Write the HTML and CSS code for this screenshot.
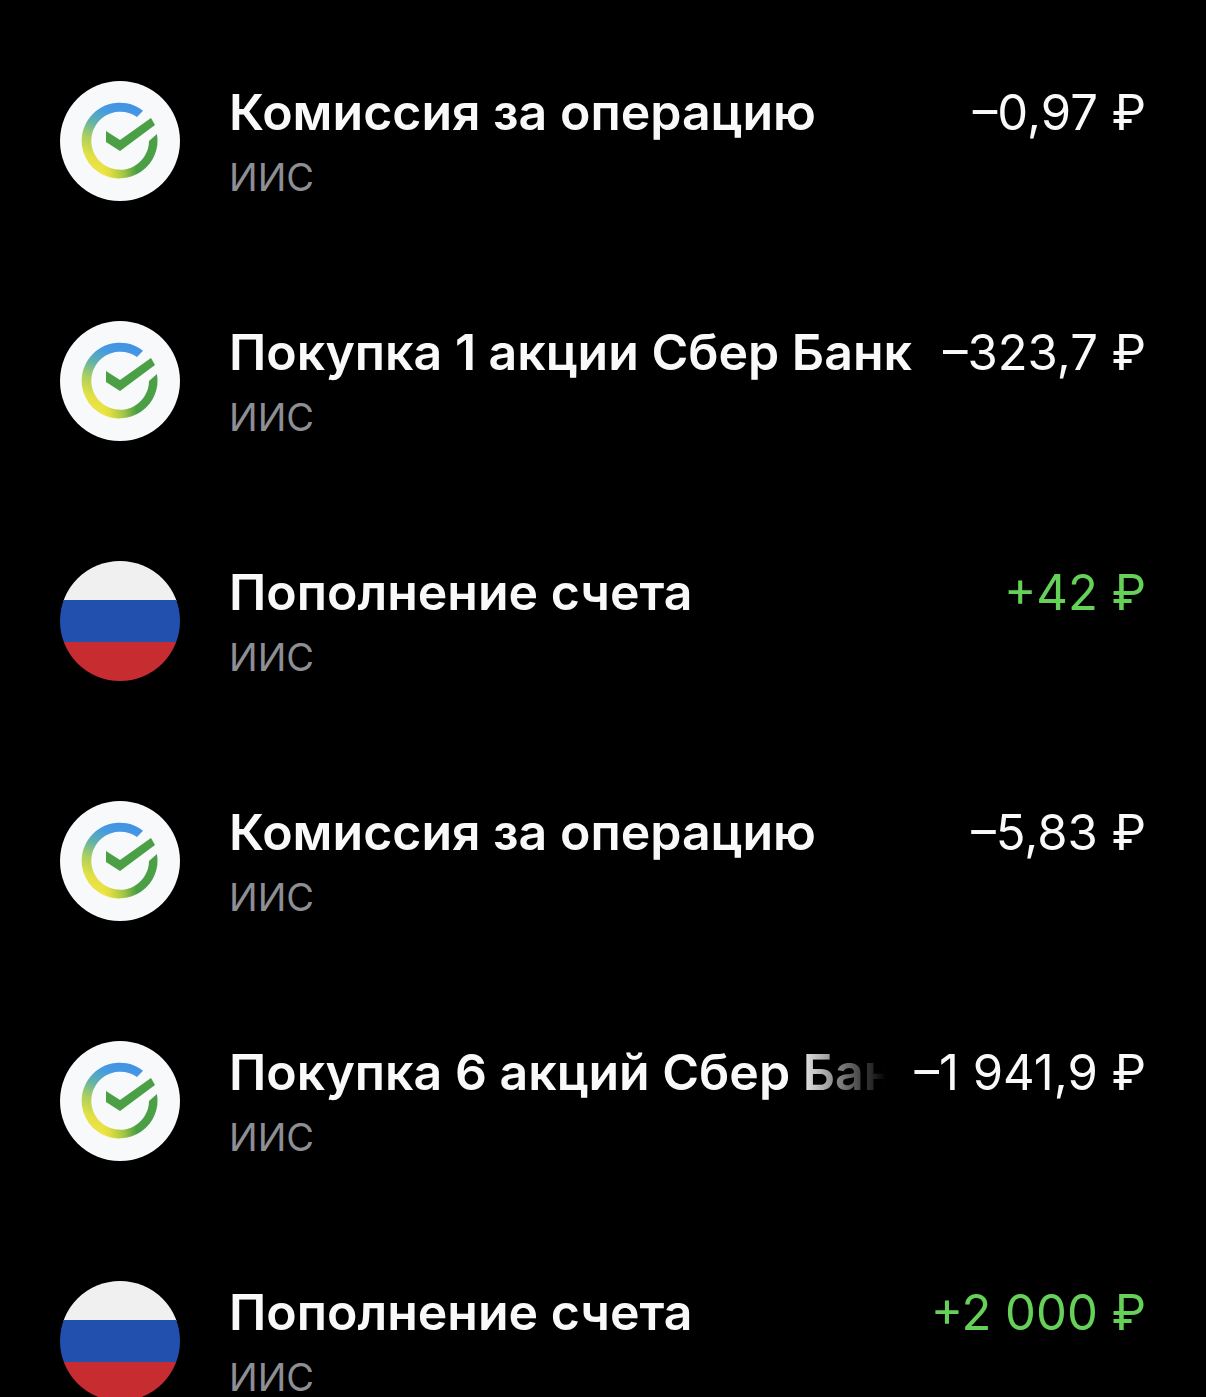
FILE: index.html
```html
<!DOCTYPE html>
<html lang="ru">

<head>
  <meta charset="UTF-8">
  <title>История операций</title>
  <meta name="viewport" content="width=device-width, initial-scale=1.0">
  <link rel="stylesheet" href="styles.css">
</head>

<body>

  <!-- Общие иконки -->
  <svg class="sprite" aria-hidden="true">
    <defs>
      <linearGradient id="ring-left" gradientUnits="userSpaceOnUse" x1="70" y1="22" x2="44" y2="94">
        <stop offset="0" stop-color="#4291e6" />
        <stop offset="0.2" stop-color="#459be0" />
        <stop offset="0.4" stop-color="#63b2a8" />
        <stop offset="0.6" stop-color="#aacf5c" />
        <stop offset="0.82" stop-color="#e2e045" />
        <stop offset="1" stop-color="#eee542" />
      </linearGradient>
      <linearGradient id="ring-bottom" gradientUnits="userSpaceOnUse" x1="40" y1="90" x2="80" y2="84">
        <stop offset="0" stop-color="#eee542" stop-opacity="0" />
        <stop offset="0.25" stop-color="#dcdc42" />
        <stop offset="0.55" stop-color="#a6c746" />
        <stop offset="0.9" stop-color="#4b9f45" />
      </linearGradient>
      <symbol id="sber" viewBox="0 0 120 120">
        <circle cx="60" cy="60" r="60" fill="#f7f9fb" />
        <path d="M83 29.700A38 38 0 1 0 60 97.700V88.700A29 29 0 1 1 77 36z" fill="url(#ring-left)" />
        <path d="M40 91.500A37.700 37.700 0 0 0 97 53L89 60A29 29 0 0 1 44 84z" fill="url(#ring-bottom)" />
        <path d="M46 50l14 9 31-22 4 7-35 26-14-9z" fill="#4b9f45" />
      </symbol>
      <symbol id="flag" viewBox="0 0 120 120">
        <clipPath id="flag-circle"><circle cx="60" cy="60" r="60" /></clipPath>
        <g clip-path="url(#flag-circle)">
          <path d="M0 0h120v40H0z" fill="#f0f0f0" />
          <path d="M0 39h120v42H0z" fill="#2250ae" />
          <path d="M0 81h120v39H0z" fill="#c62c30" />
        </g>
      </symbol>
    </defs>
  </svg>

  <!-- Список операций -->
  <ul class="operations">
    <li class="operation">
      <svg class="icon"><use href="#sber" /></svg>
      <div class="info">
        <div class="title">Комиссия за операцию</div>
        <div class="account">ИИС</div>
      </div>
      <div class="amount">–0,97 ₽</div>
    </li>
    <li class="operation">
      <svg class="icon"><use href="#sber" /></svg>
      <div class="info">
        <div class="title">Покупка 1 акции Сбер Банк</div>
        <div class="account">ИИС</div>
      </div>
      <div class="amount">–323,7 ₽</div>
    </li>
    <li class="operation">
      <svg class="icon"><use href="#flag" /></svg>
      <div class="info">
        <div class="title">Пополнение счета</div>
        <div class="account">ИИС</div>
      </div>
      <div class="amount income">+42 ₽</div>
    </li>
    <li class="operation">
      <svg class="icon"><use href="#sber" /></svg>
      <div class="info">
        <div class="title">Комиссия за операцию</div>
        <div class="account">ИИС</div>
      </div>
      <div class="amount">–5,83 ₽</div>
    </li>
    <li class="operation">
      <svg class="icon"><use href="#sber" /></svg>
      <div class="info">
        <div class="title faded">Покупка 6 акций Сбер Банк</div>
        <div class="account">ИИС</div>
      </div>
      <div class="amount">–1 941,9 ₽</div>
    </li>
    <li class="operation">
      <svg class="icon"><use href="#flag" /></svg>
      <div class="info">
        <div class="title">Пополнение счета</div>
        <div class="account">ИИС</div>
      </div>
      <div class="amount income">+2 000 ₽</div>
    </li>
  </ul>

</body>

</html>
```
FILE: styles.css
```css
body {
  margin: 0;
  background-color: #000;
  color: #f9f9f9;
  font-family: Inter, "Liberation Sans", sans-serif;
}

.sprite {
  position: absolute;
  width: 0;
  height: 0;
}

/* Список */
.operations {
  list-style: none;
  margin: 0;
  padding: 21px 60px 0;
}

.operation {
  display: flex;
  align-items: flex-start;
  padding: 60px 0;
}

.icon {
  flex: none;
  width: 120px;
  height: 120px;
  margin-right: 49px;
}

.info {
  flex: 1;
  min-width: 0;
}

/* Тексты */
.title {
  white-space: nowrap;
  font-size: 50px;
  line-height: 62px;
  font-weight: 600;
}

.faded {
  overflow: hidden;
  -webkit-mask-image: linear-gradient(to left, transparent, #000 90px);
  mask-image: linear-gradient(to left, transparent, #000 90px);
}

.account {
  margin-top: 10px;
  color: #8e8e93;
  font-size: 38px;
  line-height: 48px;
}

.amount {
  flex: none;
  margin-left: 28px;
  font-size: 49px;
  line-height: 64px;
  white-space: nowrap;
}

.income {
  color: #65d159;
}
```
